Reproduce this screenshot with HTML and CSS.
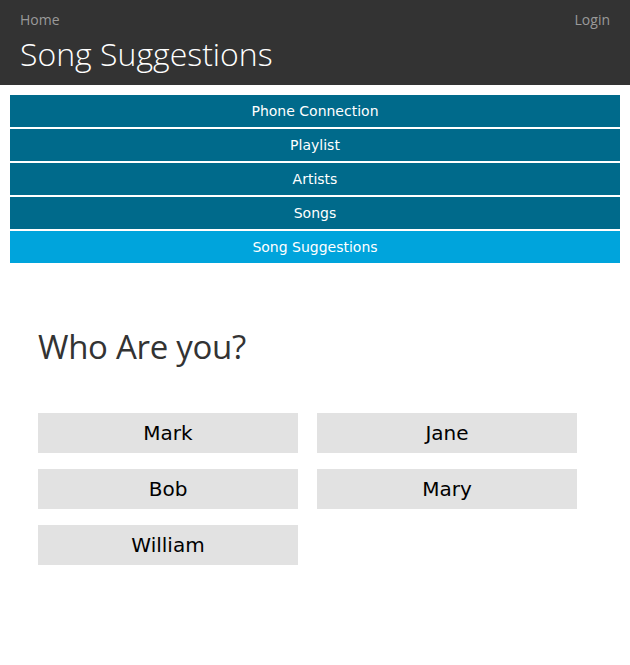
FILE: index.html
```html
<!DOCTYPE html>
<html lang="en">
<head>
    <meta charset="UTF-8">
    <meta name="viewport" content="width=device-width, initial-scale=1.0">
    <title>Song Suggestions</title>
    <link rel="stylesheet" href="styles.css">
</head>

<body>
    <!-- Header -->
    <header>
        <div class="top-links">
            <a href="#">Home</a>
            <a href="#">Login</a>
        </div>
        <h1>Song Suggestions</h1>
    </header>

    <!-- Menu -->
    <nav>
        <a href="#">Phone Connection</a>
        <a href="#">Playlist</a>
        <a href="#">Artists</a>
        <a href="#">Songs</a>
        <a href="#" class="active">Song Suggestions</a>
    </nav>

    <!-- Who are you -->
    <section id="usuarios">
        <h2>Who Are you?</h2>
        <div class="usuarios-grid">
            <button>Mark</button>
            <button>Jane</button>
            <button>Bob</button>
            <button>Mary</button>
            <button>William</button>
        </div>
    </section>
</body>
</html>
```

FILE: styles.css
```css
/* General */
body {
    margin: 0;
    font-family: 'Open Sans', sans-serif;
    background: #ffffff;
    color: #333;
}

/* Header */
header {
    background: #333333;
    color: white;
    padding: 10px 20px 0;
    height: 75px;
}

.top-links {
    display: flex;
    justify-content: space-between;
    font-size: 14px;
    line-height: 20px;
}

.top-links a {
    color: #9a9a9a;
    text-decoration: none;
}

header h1 {
    margin: 0;
    font-size: 32px;
    font-weight: 300;
    line-height: 48px;
    color: #ffffff;
}

/* Menu */
nav {
    display: flex;
    flex-direction: column;
    gap: 2px;
    padding: 10px 10px 0;
}

nav a {
    display: block;
    height: 32px;
    line-height: 32px;
    text-align: center;
    background: #006a8b;
    color: white;
    text-decoration: none;
    font-family: 'DejaVu Sans', Verdana, sans-serif;
    font-size: 14px;
}

nav a.active {
    background: #00a4dc;
}

/* Who are you */
#usuarios {
    padding: 60px 38px 0;
}

#usuarios h2 {
    margin: 0 0 42px;
    font-size: 33px;
    font-weight: 400;
    letter-spacing: -0.3px;
    line-height: 48px;
    color: #333;
}

.usuarios-grid {
    display: grid;
    grid-template-columns: 260px 260px;
    column-gap: 19px;
    row-gap: 16px;
}

.usuarios-grid button {
    height: 40px;
    border: none;
    background: #e2e2e2;
    color: #000;
    font-family: 'DejaVu Sans', Verdana, sans-serif;
    font-size: 20px;
    cursor: pointer;
}
```
